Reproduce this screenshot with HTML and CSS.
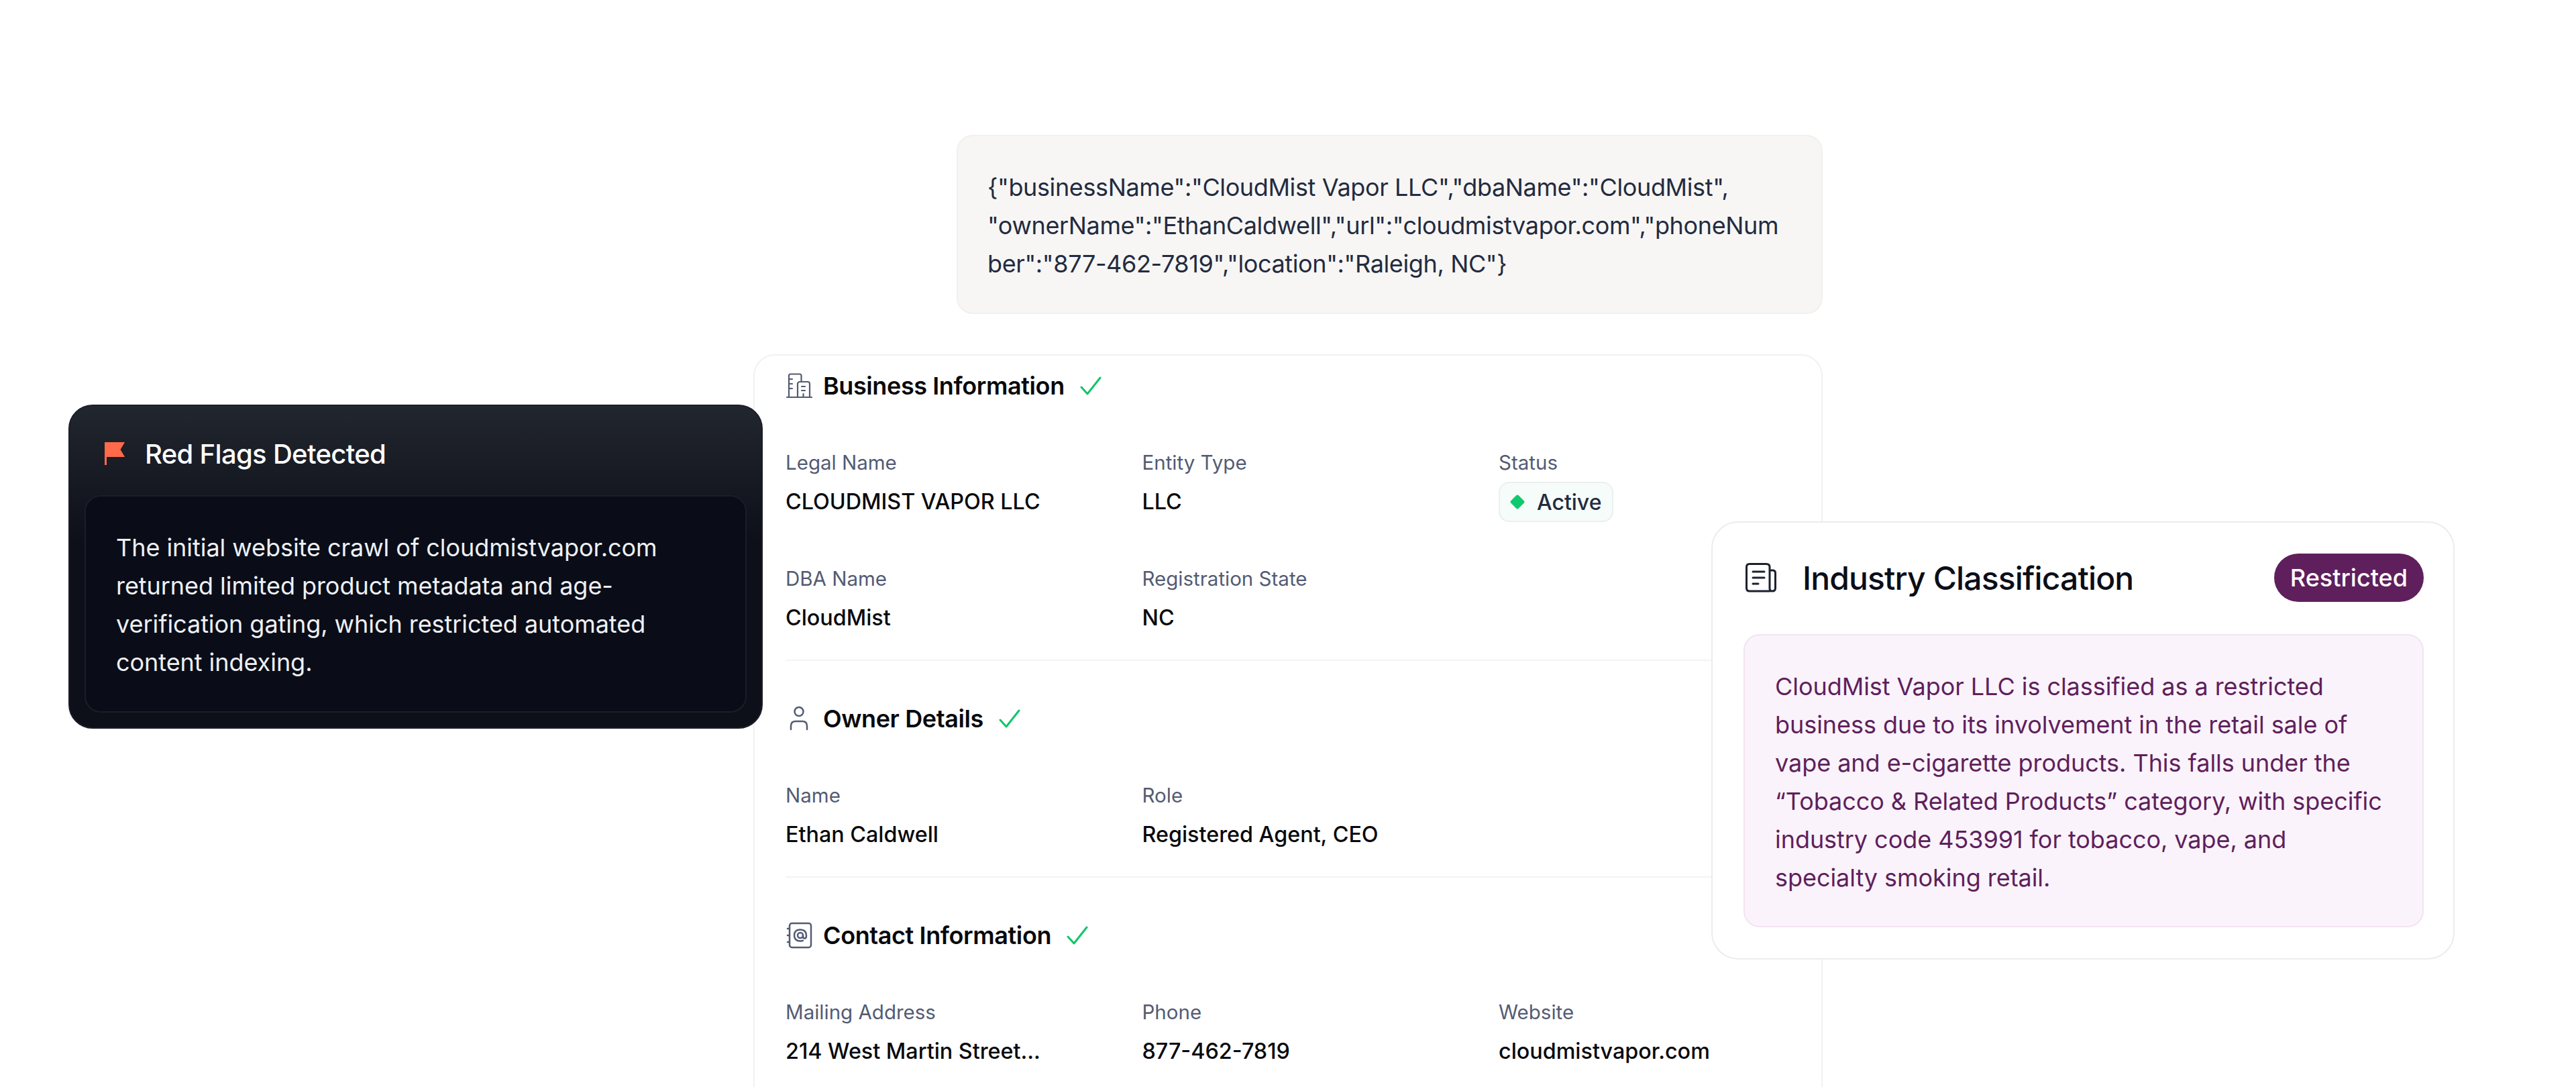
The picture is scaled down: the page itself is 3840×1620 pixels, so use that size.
FILE: index.html
```html
<!DOCTYPE html>
<html lang="en">
<head>
<meta charset="utf-8">
<title>Business verification</title>
<link rel="stylesheet" href="styles.css">
</head>
<body>
<main class="canvas">
  <div class="column">
    <div class="json-card">{"businessName":"CloudMist Vapor LLC","dbaName":"CloudMist", "ownerName":"EthanCaldwell","url":"cloudmistvapor.com","phoneNumber":"877-462-7819","location":"Raleigh, NC"}</div>
    <section class="details">
      <div class="block first">
        <h2 class="heading">
          <svg class="icon" viewBox="0 0 40 40" fill="none" stroke="#535b73" stroke-width="2.2" stroke-linecap="round" stroke-linejoin="round"><path d="M2 37h37M5 37V5q0-2.500 2.500-2.500H21q2.500 0 2.500 2.500v9"/><path d="M5 10h5M5 17h5M5 24h5M23.500 14H33q3 0 3 3v20M18 37V17.500q0-3.500 3.500-3.500h2"/><path d="M24 21h5M24 27h5M26.500 37v-5"/></svg>
          <span>Business Information</span>
          <svg class="check" viewBox="0 0 32 28" fill="none" stroke="#12c56a" stroke-width="3" stroke-linecap="round" stroke-linejoin="round"><path d="M2 16l9 10L30 2"/></svg>
        </h2>
        <div class="grid">
          <div class="field"><div class="label">Legal Name</div><div class="value">CLOUDMIST VAPOR LLC</div></div>
          <div class="field"><div class="label">Entity Type</div><div class="value">LLC</div></div>
          <div class="field"><div class="label">Status</div><div class="pill"><i class="diamond"></i>Active</div></div>
          <div class="field"><div class="label">DBA Name</div><div class="value">CloudMist</div></div>
          <div class="field"><div class="label">Registration State</div><div class="value">NC</div></div>
        </div>
      </div>
      <div class="block">
        <h2 class="heading">
          <svg class="icon" viewBox="0 0 40 40" fill="none" stroke="#535b73" stroke-width="2.500" stroke-linecap="round" stroke-linejoin="round"><circle cx="20" cy="9.500" r="6.500"/><path d="M8 36v-5q0-7 7-7h10q7 0 7 7v5"/></svg>
          <span>Owner Details</span>
          <svg class="check" viewBox="0 0 32 28" fill="none" stroke="#12c56a" stroke-width="3" stroke-linecap="round" stroke-linejoin="round"><path d="M2 16l9 10L30 2"/></svg>
        </h2>
        <div class="grid">
          <div class="field"><div class="label">Name</div><div class="value">Ethan Caldwell</div></div>
          <div class="field"><div class="label">Role</div><div class="value">Registered Agent, CEO</div></div>
        </div>
      </div>
      <div class="block">
        <h2 class="heading">
          <svg class="icon" viewBox="0 0 40 40" fill="none" stroke="#535b73" stroke-width="2.500" stroke-linecap="round" stroke-linejoin="round"><rect x="6" y="2" width="32" height="36" rx="3.500"/><path d="M3 10h3M3 20h3M3 30h3"/><circle cx="22" cy="20" r="4"/><path d="M26 20v1.500q0 3 2.500 3t2.500-4q0-9-9-9t-9 8.500 9 8.500q2.500 0 4-.8"/></svg>
          <span>Contact Information</span>
          <svg class="check" viewBox="0 0 32 28" fill="none" stroke="#12c56a" stroke-width="3" stroke-linecap="round" stroke-linejoin="round"><path d="M2 16l9 10L30 2"/></svg>
        </h2>
        <div class="grid">
          <div class="field"><div class="label">Mailing Address</div><div class="value">214 West Martin Street...</div></div>
          <div class="field"><div class="label">Phone</div><div class="value">877-462-7819</div></div>
          <div class="field"><div class="label">Website</div><div class="value">cloudmistvapor.com</div></div>
        </div>
      </div>
    </section>
  </div>

  <aside class="flags">
    <div class="flags-head">
      <svg class="flag" viewBox="0 0 30 34"><path fill="#ff6b4a" d="M0 0h30l-6.500 11L30 22H3v12H0z"/></svg>
      <span>Red Flags Detected</span>
    </div>
    <p class="flags-body">The initial website crawl of cloudmistvapor.com returned limited product metadata and age-verification gating, which restricted automated content indexing.</p>
  </aside>

  <aside class="industry">
    <div class="industry-head">
      <svg class="news" viewBox="0 0 46 44" fill="none" stroke="#1b2130" stroke-width="3" stroke-linecap="round" stroke-linejoin="round"><path d="M36 42H6q-4.500 0-4.500-4.500V6Q1.500 1.500 6 1.500h25q5 0 5 4.500v32q0 4 4 4t4.500-4V15q0-4-4-4H36"/><path d="M11 13h17M11 22h17M11 31h8"/></svg>
      <h2 class="industry-title">Industry Classification</h2>
      <span class="badge">Restricted</span>
    </div>
    <p class="industry-body">CloudMist Vapor LLC is classified as a restricted business due to its involvement in the retail sale of vape and e-cigarette products. This falls under the “Tobacco &amp; Related Products” category, with specific industry code 453991 for tobacco, vape, and specialty smoking retail.</p>
  </aside>
</main>
</body>
</html>
```

FILE: styles.css
```css
* { box-sizing: border-box; }
html, body { margin: 0; padding: 0; background: #fff; }
body { font-family: Inter, "Liberation Sans", sans-serif; }
.canvas { position: relative; width: 3840px; height: 1620px; overflow: hidden; }

.column { display: flex; flex-direction: column; align-items: flex-end; width: 2717px; height: 100%; padding-top: 201px; gap: 60px; }

.json-card {
  flex: none; width: 1291px; height: 267px; padding: 48px 44px;
  background: #f7f6f4; border: 2px solid #f1f0ee; border-radius: 24px;
  color: #232b40; font-size: 36px; letter-spacing: -0.37px; line-height: 57px; overflow-wrap: anywhere;
}

.details { flex: 1; width: 1594px; background: #fff; border: 2px solid #f1f1f1; border-bottom: 0; border-radius: 32px 32px 0 0; padding: 0 46px; }
.block { padding-top: 62px; padding-bottom: 43px; border-bottom: 2px solid #f3f3f3; }
.block.first { padding-top: 21px; }
.block:last-child { border-bottom: 0; }

.heading { display: flex; align-items: center; margin: 0 0 72px; height: 48px; font-size: 36px; font-weight: 600; letter-spacing: -0.4px; color: #08090d; }
.icon { width: 40px; height: 40px; margin-right: 16px; }
.check { width: 32px; height: 28px; margin-left: 23px; }

.grid { display: grid; grid-template-columns: repeat(3, 436px); column-gap: 95.500px; row-gap: 66px; }
.label { font-size: 29.500px; line-height: 36px; color: #535b73; margin-bottom: 22px; }
.value { font-size: 32.300px; line-height: 38px; font-weight: 500; color: #08090d; white-space: nowrap; }

.pill {
  display: inline-flex; align-items: center; height: 60px; margin-top: -11px; padding: 0 16px;
  background: #f6fcfa; border: 2px solid #e9f0ee; border-radius: 16px;
  color: #232b40; font-size: 32px; font-weight: 500;
}
.diamond { width: 16px; height: 16px; margin: 0 21px 0 2px; background: #10c96f; border-radius: 2px; transform: rotate(45deg); }

.flags {
  position: absolute; left: 102px; top: 603px; width: 1035px; height: 483px;
  padding: 0 22px; border: 2px solid #1b1e29; border-radius: 36px;
  background: linear-gradient(180deg, #22262f 0, #0d1019 42%, #0d1019 100%);
}
.flags-head { display: flex; align-items: center; height: 133px; padding: 9px 0 0 30px; gap: 30px; color: #fff; font-size: 40px; font-weight: 500; letter-spacing: -0.67px; }
.flag { width: 30px; height: 34px; }
.flags-body {
  margin: 0; height: 324px; padding: 48px 45px; background: #0a0d18;
  border: 2px solid #1a1e29; border-radius: 24px;
  color: #eef0f4; font-size: 36px; letter-spacing: -0.05px; line-height: 57px;
}

.industry {
  position: absolute; left: 2551px; top: 777px; width: 1108px; height: 653px;
  padding: 46px 44px 46px 46px; background: #fff; border: 2px solid #ececec; border-radius: 40px;
}
.industry-head { display: flex; align-items: center; height: 72px; }
.news { width: 46px; height: 44px; margin: 0 39px 0 3px; }
.industry-title { flex: 1; margin: 0; font-size: 48px; font-weight: 500; letter-spacing: -0.85px; color: #0b0e18; }
.badge { display: flex; align-items: center; height: 72px; padding: 0 24px; border-radius: 36px; background: #5f1f5c; color: #fff; font-size: 36px; font-weight: 500; }
.industry-body {
  margin: 48px 0 0; height: 437px; padding: 48px 45px;
  background: #faf3fb; border: 2px solid #f3e3f3; border-radius: 24px;
  color: #5f1f5c; font-size: 36px; letter-spacing: -0.05px; line-height: 57px;
}
```
